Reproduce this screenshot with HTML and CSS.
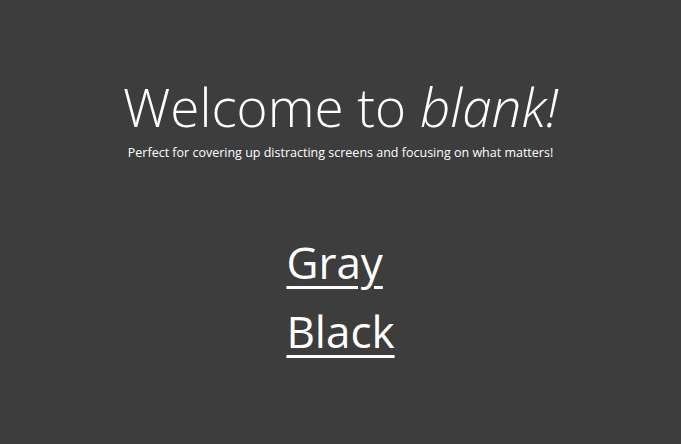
FILE: index.html
```html
<!DOCTYPE html>
<html>
<head>
<meta charset="utf-8">
<link rel="stylesheet" href="styles.css">
</head>
<body>
<main class="page">
  <header class="intro">
    <h1 class="title">Welcome to <em>blank!</em></h1>
    <p class="tagline">Perfect for covering up distracting screens and focusing on what matters!</p>
  </header>
  <nav class="choices">
    <a class="choice" href="#">Gray</a>
    <a class="choice" href="#">Black</a>
  </nav>
</main>
</body>
</html>
```
FILE: styles.css
```css
html, body {
  margin: 0;
  padding: 0;
  height: 100%;
}
body {
  background: #3d3d3d;
  color: #ffffff;
  font-family: "Open Sans", "Noto Sans", sans-serif;
}
.page {
  display: flex;
  flex-direction: column;
  align-items: center;
  padding-top: 76px;
}
.intro {
  text-align: center;
}
.title {
  margin: 0;
  font-size: 53px;
  font-weight: 330;
  line-height: 62px;
}
.title em {
  font-style: italic;
}
.tagline {
  margin: 6px 0 0;
  font-size: 12.5px;
  line-height: 18px;
}
.choices {
  display: flex;
  flex-direction: column;
  align-items: flex-start;
  margin-top: 69px;
  gap: 7px;
}
.choice {
  color: #ffffff;
  font-size: 44px;
  line-height: 62px;
  text-decoration: underline;
  text-decoration-thickness: 3px;
  text-underline-offset: 7px;
}
```
